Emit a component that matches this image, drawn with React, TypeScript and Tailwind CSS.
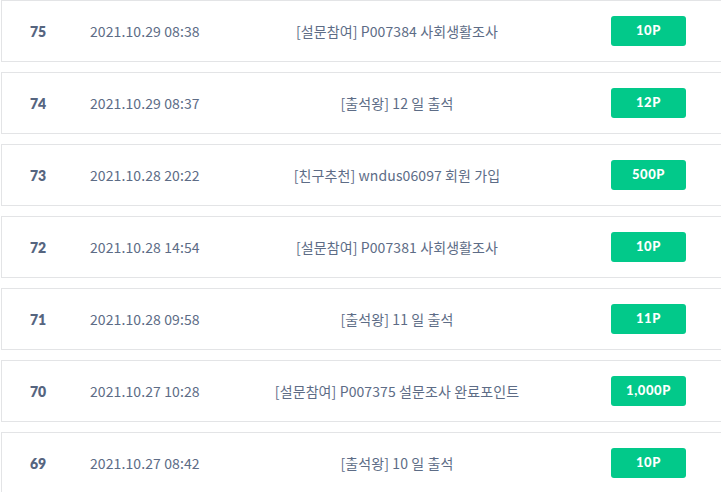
import React from 'react'

const rows = [
  { no: 75, date: '2021.10.29 08:38', title: '[설문참여] P007384 사회생활조사', point: '10P' },
  { no: 74, date: '2021.10.29 08:37', title: '[출석왕] 12 일 출석', point: '12P' },
  { no: 73, date: '2021.10.28 20:22', title: '[친구추천] wndus06097 회원 가입', point: '500P' },
  { no: 72, date: '2021.10.28 14:54', title: '[설문참여] P007381 사회생활조사', point: '10P' },
  { no: 71, date: '2021.10.28 09:58', title: '[출석왕] 11 일 출석', point: '11P' },
  { no: 70, date: '2021.10.27 10:28', title: '[설문참여] P007375 설문조사 완료포인트', point: '1,000P' },
  { no: 69, date: '2021.10.27 08:42', title: '[출석왕] 10 일 출석', point: '10P' },
]

export default function App() {
  return (
    <div className="w-[721px] h-[492px] overflow-hidden bg-white pl-px">
      <ul className="flex flex-col gap-[10px] w-[760px]">
        {rows.map((r) => (
          <li
            key={r.no}
            className="flex items-center h-[62px] border border-[#e3e4e6] text-[#5d6c86] font-['Noto_Sans_CJK_KR','Noto_Sans',sans-serif] text-[14px]"
          >
            <div className="w-[72px] text-center font-['Lato',sans-serif] font-extrabold text-[14px] text-[#56657f]">
              {r.no}
            </div>
            <div className="w-[160px] pl-4 tracking-[0.1px]">{r.date}</div>
            <div className="w-[326px] text-center tracking-[0.1px]">{r.title}</div>
            <div className="ml-[51px] w-[75px]">
              <span className="flex items-center justify-center h-[30px] rounded-[3px] bg-[#02c98a] text-white font-['Lato',sans-serif] font-black text-[13px] tracking-[0.6px]">
                {r.point}
              </span>
            </div>
          </li>
        ))}
      </ul>
    </div>
  )
}
